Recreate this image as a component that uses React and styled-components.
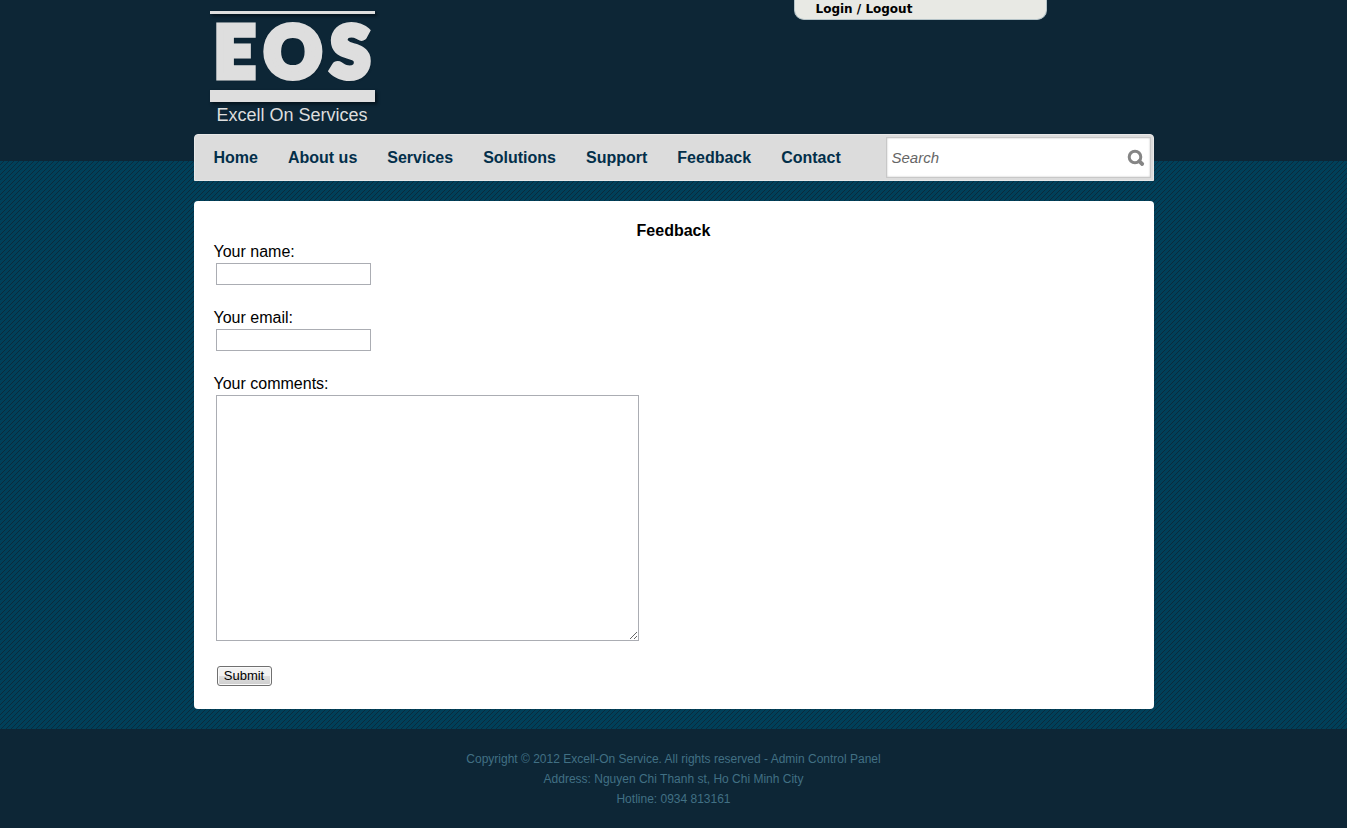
import React from "react";
import styled, { createGlobalStyle } from "styled-components";

const GlobalStyle = createGlobalStyle`
  * { box-sizing: border-box; }
  body {
    margin: 0;
    background: #0d2636;
    font-family: "Liberation Sans", Arial, sans-serif;
    font-size: 16px;
    color: #000;
  }
`;

const Page = styled.div`
  background-color: #00405a;
  background-image: linear-gradient(#0d2636, #0d2636),
    url("data:image/svg+xml,%3Csvg xmlns='http://www.w3.org/2000/svg' width='5' height='5' shape-rendering='crispEdges'%3E%3Cpath fill='%230b2a3c' d='M4 0h1v1h-1zM3 1h1v1h-1zM2 2h1v1h-1zM1 3h1v1h-1zM0 4h1v1h-1z'/%3E%3C/svg%3E");
  background-size: 100% 161px, 5px 5px;
  background-repeat: no-repeat, repeat;
`;

const Container = styled.div`
  width: 100%;
  max-width: 960px;
  margin: 0 auto;
`;

const Header = styled.header`
  display: flex;
  justify-content: space-between;
  align-items: flex-start;
  height: 134px;
  padding: 0 107px 0 16px;
`;

const Logo = styled.a`
  display: block;
  width: 165px;
  margin-top: 11px;
  color: #dedede;
  text-decoration: none;
`;

const LogoBar = styled.span`
  display: block;
  height: ${(p) => p.$height}px;
  background: #dedede;
  box-shadow: 2px 2px 3px #04121c;
`;

const LogoMark = styled.span`
  display: flex;
  justify-content: space-between;
  height: 76px;
  padding: 0 5px;
  font: 900 70px/72px Lato, sans-serif;
  -webkit-text-stroke: 7px #dedede;
  text-shadow: 2px 2px 3px #04121c;
`;

const LogoName = styled.span`
  display: block;
  font-size: 18px;
  line-height: 26px;
  text-align: center;
`;

const LoginTab = styled.div`
  width: 253px;
  height: 20px;
  padding-left: 21px;
  border: solid #b5c3c7;
  border-width: 0 1px 1px;
  border-radius: 0 0 10px 10px;
  background: #e8e9e4;
  font: bold 12px/18px "DejaVu Sans", Verdana, sans-serif;
`;

const LoginLink = styled.a`
  color: #000;
  text-decoration: none;
`;

const NavBar = styled.nav`
  display: flex;
  justify-content: space-between;
  align-items: center;
  height: 47px;
  padding: 0 2px 0 19px;
  border: 1px solid #e8e8e8;
  border-radius: 4px 4px 0 0;
  background: #dcdcdc;
`;

const NavLinks = styled.div`
  display: flex;
  gap: 30px;
`;

const NavLink = styled.a`
  color: #032f4a;
  font-weight: bold;
  text-decoration: none;
`;

const SearchForm = styled.form`
  display: flex;
  align-items: center;
  width: 265px;
  height: 41px;
  padding: 0 5px;
  border: 1px solid #c8c8c8;
  background: #fff;
  box-shadow: inset 0 0 2px #bbb;
`;

const SearchInput = styled.input`
  flex: 1;
  min-width: 0;
  padding: 0;
  border: 0;
  outline: 0;
  background: transparent;
  font: italic 15px/20px "Liberation Sans", Arial, sans-serif;
  &::placeholder { color: #666; opacity: 1; }
`;

const SearchButton = styled.button`
  display: flex;
  padding: 0;
  border: 0;
  background: transparent;
`;

const Panel = styled.main`
  margin-top: 20px;
  padding: 20px 20px 23px;
  border-radius: 4px;
  background: #fff;
`;

const Title = styled.h1`
  margin: 0;
  font-size: 16px;
  line-height: 20px;
  text-align: center;
`;

const Field = styled.div`
  display: flex;
  flex-direction: column;
  align-items: flex-start;
  margin-bottom: ${(p) => p.$space || 22}px;
`;

const Label = styled.label`
  line-height: 22px;
`;

const TextInput = styled.input`
  width: 155px;
  height: 22px;
  margin-left: 2px;
  border: 1px solid #abadb3;
  background: #fff;
`;

const Comments = styled.textarea`
  display: block;
  width: 423px;
  max-width: 100%;
  height: 246px;
  margin-left: 2px;
  border: 1px solid #abadb3;
  background: #fff;
  resize: both;
`;

const SubmitButton = styled.button`
  display: block;
  min-width: 55px;
  height: 20px;
  margin-left: 3px;
  padding: 0 6px;
  border: 1px solid #707070;
  border-radius: 3px;
  background: linear-gradient(#f2f2f2 50%, #dddddd 50%, #cfcfcf);
  box-shadow: inset 0 0 0 1px #fafafa;
  color: #000;
  font: 13px/18px "Liberation Sans", Arial, sans-serif;
`;

const Stage = styled.div`
  padding-bottom: 20px;
`;

const Footer = styled.footer`
  padding: 20px 0 19px;
  background: #0d2636;
  color: #417084;
  font-size: 12px;
  line-height: 20px;
  text-align: center;
`;

const FooterLine = styled.div``;

const FooterLink = styled.a`
  color: inherit;
  text-decoration: none;
`;

const links = ["Home", "About us", "Services", "Solutions", "Support", "Feedback", "Contact"];

export default function App() {
  return (
    <>
      <GlobalStyle />
      <Page>
        <Stage>
          <Container>
            <Header>
              <Logo href="#home">
                <LogoBar $height={3} />
                <LogoMark><span>E</span><span>O</span><span>S</span></LogoMark>
                <LogoBar $height={12} />
                <LogoName>Excell On Services</LogoName>
              </Logo>
              <LoginTab>
                <LoginLink href="#login">Login / Logout</LoginLink>
              </LoginTab>
            </Header>
            <NavBar>
              <NavLinks>
                {links.map((name) => (
                  <NavLink key={name} href="#">{name}</NavLink>
                ))}
              </NavLinks>
              <SearchForm role="search">
                <SearchInput type="text" placeholder="Search" aria-label="Search" />
                <SearchButton type="button" aria-label="Run search">
                  <svg width="18" height="18" viewBox="0 0 18 18" fill="none" stroke="#858585">
                    <circle cx="8" cy="8" r="5.8" strokeWidth="3" />
                    <path d="M12.2 12.2l3 2.8" strokeWidth="3.8" strokeLinecap="round" />
                  </svg>
                </SearchButton>
              </SearchForm>
            </NavBar>
            <Panel>
              <Title>Feedback</Title>
              <form>
                <Field>
                  <Label htmlFor="name">Your name:</Label>
                  <TextInput id="name" type="text" />
                </Field>
                <Field>
                  <Label htmlFor="email">Your email:</Label>
                  <TextInput id="email" type="text" />
                </Field>
                <Field $space={25}>
                  <Label htmlFor="comments">Your comments:</Label>
                  <Comments id="comments" />
                </Field>
                <SubmitButton type="button">Submit</SubmitButton>
              </form>
            </Panel>
          </Container>
        </Stage>
        <Footer>
          <FooterLine>
            Copyright © 2012 Excell-On Service. All rights reserved - <FooterLink href="#admin">Admin Control Panel</FooterLink>
          </FooterLine>
          <FooterLine>Address: Nguyen Chi Thanh st, Ho Chi Minh City</FooterLine>
          <FooterLine>Hotline: 0934 813161</FooterLine>
        </Footer>
      </Page>
    </>
  );
}
